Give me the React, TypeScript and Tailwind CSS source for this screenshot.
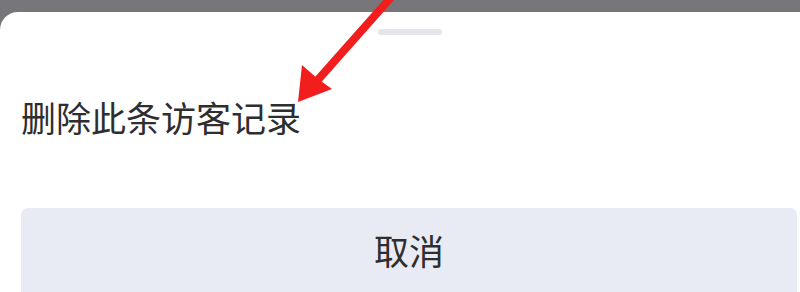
export default function App() {
  return (
    <div className="relative w-[800px] h-[292px] overflow-hidden bg-[#77767b]" style={{ fontFamily: '"Noto Sans CJK SC", "Noto Sans", sans-serif' }}>
      <div className="mt-[12px] h-[280px] bg-white rounded-tl-[18px] flex flex-col">
        <div className="flex justify-center pt-[17px] pl-[20px]">
          <div className="w-[64px] h-[6px] rounded-full bg-[#e3e5ea]" />
        </div>
        <div className="pl-[21px] mt-[62px] text-[35px] leading-[40px] text-[#2e2e2e]">删除此条访客记录</div>
        <div className="ml-[21px] mr-[3px] mt-[71px] flex-1 bg-[#e8eaf4] rounded-t-[7px] flex items-start justify-center pt-[22px]">
          <span className="text-[35px] leading-[40px] text-[#2e2e2e]">取消</span>
        </div>
      </div>
      <svg className="absolute left-0 top-0" width="800" height="292" viewBox="0 0 800 292">
        <line x1="394" y1="-6" x2="316" y2="82" stroke="#f21d1d" strokeWidth="8" strokeLinecap="round" />
        <polygon points="298,102 302,65 318,79 332,89" fill="#f21d1d" />
      </svg>
    </div>
  );
}
